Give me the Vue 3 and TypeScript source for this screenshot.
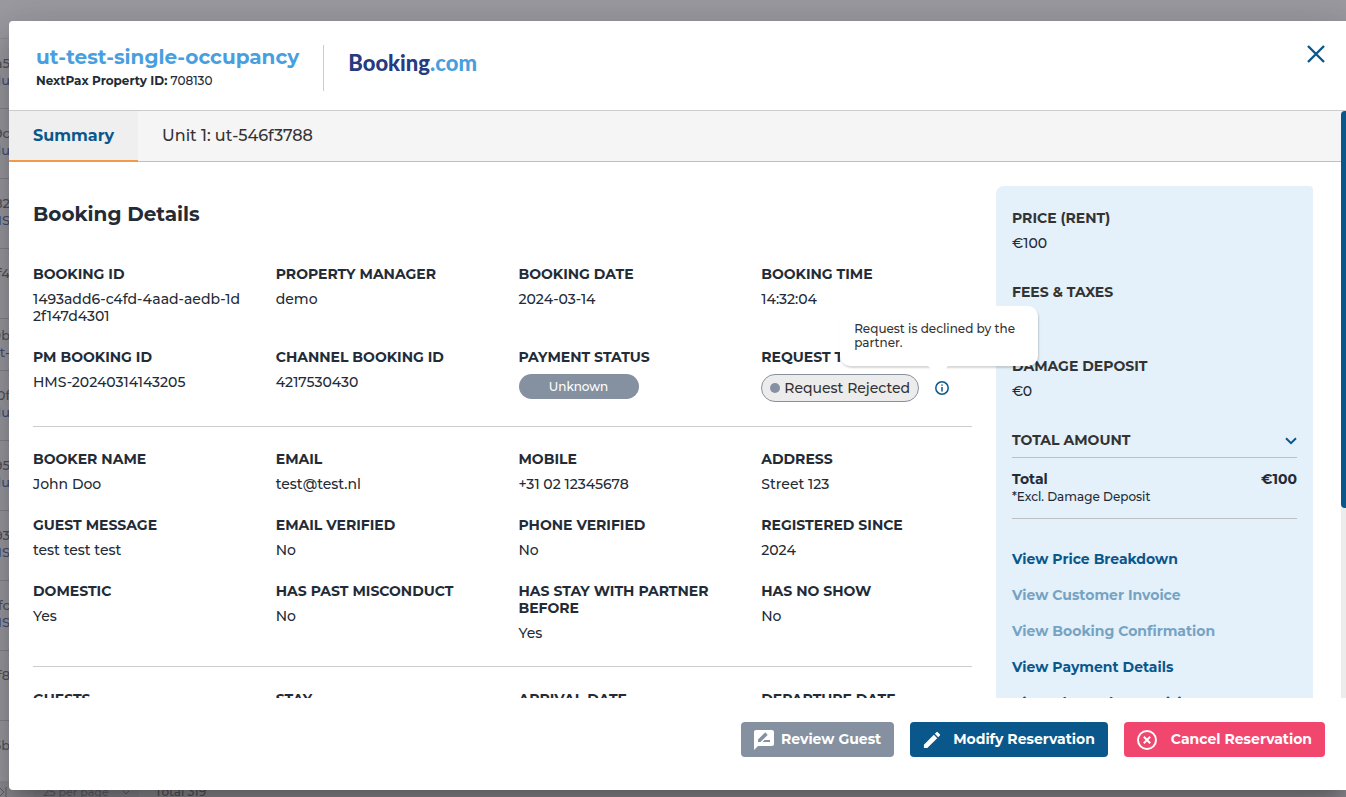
<script setup lang="ts">
import { ref } from 'vue'

interface Field {
  label: string
  value?: string
  kind?: 'pill' | 'request'
}

const sections: Field[][] = [
  [
    { label: 'BOOKING ID', value: '1493add6-c4fd-4aad-aedb-1d2f147d4301' },
    { label: 'PROPERTY MANAGER', value: 'demo' },
    { label: 'BOOKING DATE', value: '2024-03-14' },
    { label: 'BOOKING TIME', value: '14:32:04' },
    { label: 'PM BOOKING ID', value: 'HMS-20240314143205' },
    { label: 'CHANNEL BOOKING ID', value: '4217530430' },
    { label: 'PAYMENT STATUS', value: 'Unknown', kind: 'pill' },
    { label: 'REQUEST TYPE', value: 'Request Rejected', kind: 'request' },
  ],
  [
    { label: 'BOOKER NAME', value: 'John Doo' },
    { label: 'EMAIL', value: 'test@test.nl' },
    { label: 'MOBILE', value: '+31 02 12345678' },
    { label: 'ADDRESS', value: 'Street 123' },
    { label: 'GUEST MESSAGE', value: 'test test test' },
    { label: 'EMAIL VERIFIED', value: 'No' },
    { label: 'PHONE VERIFIED', value: 'No' },
    { label: 'REGISTERED SINCE', value: '2024' },
    { label: 'DOMESTIC', value: 'Yes' },
    { label: 'HAS PAST MISCONDUCT', value: 'No' },
    { label: 'HAS STAY WITH PARTNER BEFORE', value: 'Yes' },
    { label: 'HAS NO SHOW', value: 'No' },
  ],
  [
    { label: 'GUESTS' },
    { label: 'STAY' },
    { label: 'ARRIVAL DATE' },
    { label: 'DEPARTURE DATE' },
  ],
]

const prices: Field[] = [
  { label: 'PRICE (RENT)', value: '€100' },
  { label: 'FEES & TAXES', value: '' },
  { label: 'DAMAGE DEPOSIT', value: '€0' },
]

const links = [
  { text: 'View Price Breakdown', muted: false },
  { text: 'View Customer Invoice', muted: true },
  { text: 'View Booking Confirmation', muted: true },
  { text: 'View Payment Details', muted: false },
  { text: 'View Channel Commision', muted: false },
]

const tabs = ['Summary', 'Unit 1: ut-546f3788']
const activeTab = ref(0)

const rows = [
  { id: 'a5', sub: 'du' },
  { id: '9c', sub: 'du' },
  { id: '82', sub: 'MS' },
  { id: 'f4', sub: '' },
  { id: '9b', sub: 't-', short: true },
  { id: '0f', sub: 'du' },
  { id: '95', sub: 'du' },
  { id: '93', sub: 'MS' },
  { id: 'fc', sub: 'MS' },
  { id: 'f8', sub: '' },
  { id: '5b', sub: '' },
]
</script>

<template>
  <div class="page">
    <div class="backdrop" aria-hidden="true">
      <div class="list">
        <div v-for="(r, i) in rows" :key="i" class="list-row" :class="{ short: r.short }">
          <span>{{ r.id }}</span>
          <span v-if="r.sub" class="sub">{{ r.sub }}</span>
        </div>
      </div>
      <div class="pager">
        <svg class="last" viewBox="0 0 7 10"><path d="M0 1l4 4-4 4M6 0v10" /></svg>
        <span class="per-page">25 per page
          <svg viewBox="0 0 8 6"><path d="M1 1l3 3 3-3" /></svg>
        </span>
        <span class="total-count">Total 319</span>
      </div>
    </div>

    <section class="modal" role="dialog" aria-labelledby="dialog-title">
      <header class="head">
        <div class="title">
          <h1 id="dialog-title">ut-test-single-occupancy</h1>
          <p><b>NextPax Property ID:</b> 708130</p>
        </div>
        <div class="brand">Booking<span>.com</span></div>
        <button class="close" type="button" aria-label="Close">
          <svg viewBox="0 0 18 18"><path d="M1 1l16 16M17 1L1 17" /></svg>
        </button>
      </header>

      <div class="viewport">
        <div class="scroll">
          <nav class="tabs" role="tablist">
            <button
              v-for="(t, i) in tabs"
              :key="t"
              type="button"
              role="tab"
              :aria-selected="activeTab === i"
              :class="{ active: activeTab === i }"
              @click="activeTab = i"
            >{{ t }}</button>
          </nav>

          <div class="body">
            <main class="details">
              <h2>Booking Details</h2>
              <dl v-for="(s, i) in sections" :key="i" class="grid">
                <div v-for="f in s" :key="f.label" class="field">
                  <dt>{{ f.label }}</dt>
                  <dd v-if="f.kind === 'pill'"><span class="pill">{{ f.value }}</span></dd>
                  <dd v-else-if="f.kind === 'request'" class="request">
                    <span class="chip"><i></i>{{ f.value }}</span>
                    <span class="info">
                      <button type="button" aria-label="Request information" aria-describedby="request-tip">
                        <svg viewBox="0 0 14 14">
                          <circle cx="7" cy="7" r="6.2" />
                          <path d="M7 6v4.6M7 3.4v1.4" />
                        </svg>
                      </button>
                      <span id="request-tip" class="tip" role="tooltip">Request is declined by the partner.</span>
                    </span>
                  </dd>
                  <dd v-else>{{ f.value }}</dd>
                </div>
              </dl>
            </main>

            <aside class="side">
              <dl>
                <div v-for="p in prices" :key="p.label" class="price">
                  <dt>{{ p.label }}</dt>
                  <dd>{{ p.value }}</dd>
                </div>
              </dl>
              <button class="amount" type="button">
                TOTAL AMOUNT
                <svg viewBox="0 0 12 8"><path d="M1 1.2l5 5 5-5" /></svg>
              </button>
              <div class="sum">
                <p class="line"><span>Total</span><span>€100</span></p>
                <p class="note">*Excl. Damage Deposit</p>
              </div>
              <ul class="links">
                <li v-for="l in links" :key="l.text">
                  <a href="#" :class="{ muted: l.muted }">{{ l.text }}</a>
                </li>
              </ul>
            </aside>
          </div>
        </div>
        <div class="track" aria-hidden="true"><div class="thumb"></div></div>
      </div>

      <footer class="foot">
        <button class="btn grey" type="button">
          <svg viewBox="2 2 20 20"><path d="M20 2H4c-1.1 0-2 .9-2 2v18l4-4h14c1.1 0 2-.9 2-2V4c0-1.100-.9-2-2-2zM6 14v-2.470l6.880-6.880c.2-.2.510-.2.710 0l1.770 1.770c.2.2.2.510 0 .710L8.470 14H6zm12 0h-7.500l2-2H18v2z" /></svg>
          Review Guest
        </button>
        <button class="btn blue" type="button">
          <svg viewBox="2 2 20 20"><path d="M3 17.250V21h3.750L17.810 9.940l-3.750-3.750L3 17.250zM20.710 7.040a1 1 0 000-1.410l-2.340-2.340a1 1 0 00-1.410 0l-1.830 1.830 3.750 3.750 1.830-1.830z" /></svg>
          Modify Reservation
        </button>
        <button class="btn red" type="button">
          <svg viewBox="0 0 20 20"><circle cx="10" cy="10" r="9" /><path d="M6.800 6.800l6.400 6.400M13.200 6.800l-6.400 6.400" /></svg>
          Cancel Reservation
        </button>
      </footer>
    </section>
  </div>
</template>

<style>
body {
  margin: 0;
}
</style>

<style scoped>
* {
  box-sizing: border-box;
}

h1, h2, p, dl, dd, ul {
  margin: 0;
  padding: 0;
}

button {
  font: inherit;
  border: 0;
  padding: 0;
  background: none;
  cursor: pointer;
}

svg {
  flex: none;
}

.page {
  position: relative;
  height: 100vh;
  overflow: hidden;
  padding: 21px 0 7px 9px;
  background: #9b9aa0;
  color: #232b36;
  font-family: Montserrat, Inter, "Open Sans", sans-serif;
  font-size: 14px;
  font-weight: 500;
  line-height: 17px;
}

.backdrop {
  position: absolute;
  inset: 0;
  display: flex;
  flex-direction: column;
  color: #53525a;
}

.list {
  flex: 1;
  min-height: 0;
  overflow: hidden;
  border-top: 1px solid #8e8d93;
  margin-top: 38px;
}

.list-row {
  display: flex;
  flex-direction: column;
  align-items: flex-end;
  width: 10px;
  height: 70px;
  padding-top: 16px;
  border-bottom: 1px solid #85848a;
  font-size: 13px;
  white-space: nowrap;
}

.list-row.short {
  height: 52px;
  padding-top: 8px;
}

.list-row:last-child {
  height: 56px;
  border: 0;
}

.sub {
  color: #454f74;
}

.pager {
  display: flex;
  align-items: flex-end;
  height: 16px;
  background: #8d8c92;
  font-size: 12px;
  line-height: 10px;
}

.pager svg {
  fill: none;
  stroke: #5f5e65;
  stroke-width: 1px;
}

.last {
  width: 7px;
  height: 10px;
}

.per-page {
  width: 105px;
  margin-left: 27px;
  padding-left: 9px;
  background: #89888e;
  color: #65646a;
  font-size: 11px;
}

.per-page svg {
  width: 8px;
  height: 6px;
  margin-left: 10px;
}

.total-count {
  margin-left: 16px;
}

.modal {
  position: relative;
  display: flex;
  flex-direction: column;
  height: 100%;
  background: #fff;
  border-radius: 4px 0 0 4px;
  box-shadow: 0 11px 15px -7px rgba(0, 0, 0, 0.2), 0 24px 38px 3px rgba(0, 0, 0, 0.14), 0 9px 46px 8px rgba(0, 0, 0, 0.12);
}

.head {
  display: flex;
  align-items: center;
  flex: none;
  height: 90px;
  padding: 4px 21px 0 27px;
  border-bottom: 1px solid #ccc;
}

.title {
  height: 46px;
  padding-right: 24px;
  border-right: 1px solid #ccc;
}

.title h1 {
  color: #489fdf;
  font-size: 20px;
  line-height: 24px;
  font-weight: 700;
}

.title p {
  padding-top: 2px;
  font-size: 12px;
  line-height: 20px;
}

.brand {
  margin-left: 24px;
  margin-bottom: 10px;
  color: #263b80;
  font-family: Lato, sans-serif;
  font-weight: 900;
  font-size: 22px;
  line-height: 28px;
}

.brand span {
  color: #499fdd;
}

.close {
  width: 18px;
  height: 18px;
  margin-left: auto;
  margin-bottom: 28px;
}

.close svg {
  display: block;
  width: 18px;
  height: 18px;
  fill: none;
  stroke: #0a578b;
  stroke-width: 2.4px;
}

.viewport {
  display: flex;
  flex: 1;
  min-height: 0;
}

.scroll {
  flex: 1;
  min-width: 0;
  overflow: hidden;
}

.track {
  width: 5px;
  background: #ececec;
}

.thumb {
  height: 67.6%;
  border-radius: 4px 0 0 4px;
  background: #0a578b;
}

.tabs {
  display: flex;
  height: 51px;
  background: #f5f5f5;
  box-shadow: inset 0 -1px #bfbfbf;
}

.tabs button {
  padding: 0 24px;
  border-bottom: 2px solid transparent;
  color: #333;
  font-size: 16px;
}

.tabs .active {
  background: #efefef;
  border-color: #f2994a;
  color: #0a578b;
  font-weight: 700;
}

.body {
  display: flex;
  gap: 24px;
  padding: 24px 28px 24px 24px;
}

.details {
  flex: 1;
  min-width: 0;
}

.details h2 {
  padding: 16px 0 40px;
  font-size: 20px;
  line-height: 24px;
  font-weight: 700;
}

.grid {
  display: grid;
  grid-template-columns: repeat(4, minmax(0, 1fr));
  gap: 24px 32px;
  padding-bottom: 24px;
}

.grid + .grid {
  padding-top: 24px;
  border-top: 1px solid #ccc;
}

dt {
  font-weight: 700;
  margin-bottom: 8px;
}

.field dd {
  overflow-wrap: anywhere;
  word-break: break-all;
}

.pill {
  display: block;
  width: 120px;
  border-radius: 13px;
  background: #8591a0;
  color: #fff;
  font-size: 12px;
  line-height: 25px;
  text-align: center;
}

.field .request {
  display: flex;
  align-items: center;
  gap: 16px;
  word-break: normal;
}

.chip {
  display: flex;
  align-items: center;
  gap: 4px;
  height: 28px;
  padding: 0 8px;
  border: 1px solid #8591a0;
  border-radius: 14px;
  background: #ececec;
  color: #333;
  white-space: nowrap;
}

.chip i {
  width: 10px;
  height: 10px;
  border-radius: 50%;
  background: #8591a0;
}

.info {
  position: relative;
  display: flex;
}

.info svg {
  display: block;
  width: 14px;
  height: 14px;
  fill: none;
  stroke: #0a578b;
  stroke-width: 1.5px;
}

.tip {
  position: absolute;
  z-index: 2;
  bottom: 29px;
  left: -95px;
  width: 198px;
  height: 60px;
  padding: 16px 14px;
  border-radius: 10px;
  background: #fff;
  box-shadow: 1px 2px 2px rgba(0, 0, 0, 0.16);
  color: #333;
  font-size: 12px;
  line-height: 14px;
}

.tip::after {
  content: "";
  position: absolute;
  top: 100%;
  left: 88px;
  border: 10px solid transparent;
  border-top-color: #fff;
  border-bottom: 0;
}

.side {
  flex: none;
  width: 317px;
  padding: 24px 16px;
  border-radius: 8px 4px 0 0;
  background: #e4f0fa;
}

.side dt,
.amount {
  color: #333;
}

.price {
  height: 74px;
}

.amount {
  display: flex;
  align-items: center;
  justify-content: space-between;
  width: 100%;
  height: 25px;
  padding-bottom: 8px;
  font-weight: 700;
}

.amount svg {
  width: 12px;
  height: 8px;
  fill: none;
  stroke: #0a578b;
  stroke-width: 2px;
}

.sum {
  padding: 13px 0;
  border: solid #bfbfbf;
  border-width: 1px 0;
}

.line {
  display: flex;
  justify-content: space-between;
  font-weight: 700;
}

.note {
  font-size: 12px;
}

.links {
  display: flex;
  flex-direction: column;
  gap: 19px;
  padding-top: 32px;
  list-style: none;
}

.links a {
  color: #0a578b;
  font-weight: 700;
  text-decoration: none;
}

.links .muted {
  color: #76a3c3;
}

.foot {
  display: flex;
  flex: none;
  justify-content: flex-end;
  gap: 16px;
  padding: 24px 21px 33px;
}

.btn {
  display: flex;
  align-items: center;
  height: 35px;
  padding: 0 13px;
  border-radius: 4px;
  color: #fff;
  font-weight: 700;
}

.btn svg {
  width: 20px;
  height: 20px;
  fill: #fff;
}

.grey {
  gap: 7px;
  background: #8591a0;
}

.blue {
  gap: 12px;
  background: #0a578b;
}

.blue svg {
  width: 18px;
  height: 18px;
}

.red {
  gap: 14px;
  background: #f1476f;
}

.red svg {
  fill: none;
  stroke: #fff;
  stroke-width: 2px;
}
</style>
